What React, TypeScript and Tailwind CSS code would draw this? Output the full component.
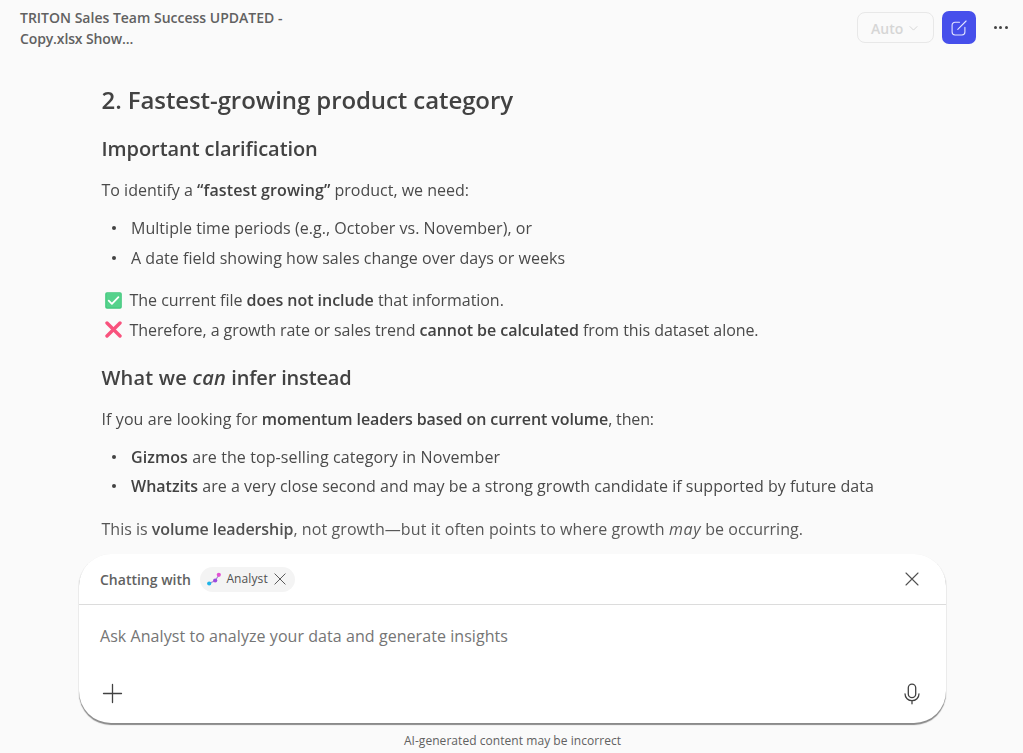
import type { ReactNode } from "react";

function B({ children, className = "" }: { children: ReactNode; className?: string }) {
  return <strong className={`font-semibold text-[#424242] ${className}`}>{children}</strong>;
}

function Bullet({ children }: { children: ReactNode }) {
  return (
    <li className="flex h-[30px] items-center">
      <span className="ml-[10.5px] mr-[15px] size-[4px] shrink-0 rounded-full bg-[#424242]" />
      <span className="whitespace-pre">{children}</span>
    </li>
  );
}

function CheckMark() {
  return (
    <svg className="ml-[3px] mr-[8px] size-[17px] shrink-0" viewBox="0 0 17 17" fill="none">
      <rect x="0.2" y="0.2" width="16.6" height="16.6" rx="1.8" fill="#3fc77c" />
      <rect x="1.4" y="1" width="14.4" height="14.4" rx="1" fill="#55d28c" />
      <path d="M3.7 8.7 6.9 11.8 13.4 5.2" stroke="#fff" strokeWidth="1.8" strokeLinecap="round" strokeLinejoin="round" />
    </svg>
  );
}

function CrossMark() {
  return (
    <svg className="ml-[3px] mr-[8px] size-[17px] shrink-0" viewBox="0 0 17 17" fill="none">
      <path d="M2 2 15 15M15 2 2 15" stroke="#f8527d" strokeWidth="3.4" strokeLinecap="round" />
    </svg>
  );
}

function Close({ className }: { className: string }) {
  return (
    <svg className={className} viewBox="0 0 14 14" fill="none">
      <path d="M1 1 13 13M13 1 1 13" stroke="#505050" strokeWidth="1.1" strokeLinecap="round" />
    </svg>
  );
}

function Header() {
  return (
    <header className="flex h-[84px] shrink-0 items-start justify-between pl-[20px] pr-[15px]">
      <h1 className="w-[290px] pt-[7px] text-[14px] font-semibold leading-[21px] text-[#616161]">
        TRITON Sales Team Success UPDATED - <span className="tracking-[-0.13px]">Copy.xlsx Show...</span>
      </h1>
      <div className="flex items-center pt-[11px]">
        <button className="flex h-[31px] w-[77px] items-center rounded-[8px] border border-[#e8e8e8] pl-[13px] pt-[2px] text-[14px] font-semibold leading-none text-[#d6d6d6]">
          Auto
          <svg className="ml-[6px] size-[9px]" viewBox="0 0 9 9" fill="none">
            <path d="M1 2.6 4.5 6.1 8 2.6" stroke="#d6d6d6" strokeLinecap="round" strokeLinejoin="round" />
          </svg>
        </button>
        <button className="ml-[8px] flex h-[33px] w-[34px] items-center justify-center rounded-[7px] bg-[#464feb]">
          <svg className="size-[18px]" viewBox="0 0 18 18" fill="none" stroke="#e4e6ff" strokeWidth="1.1" strokeLinecap="round">
            <path d="M9.5 3.2H5A2.9 2.9 0 0 0 2.1 6.1v7A2.9 2.9 0 0 0 5 16h7a2.9 2.9 0 0 0 2.9-2.9V8.4" />
            <path d="M7.8 10.3 16.1 2" />
          </svg>
        </button>
        <button className="ml-[17px] flex w-[15px] items-center justify-between px-[0.5px]">
          <span className="size-[3px] rounded-full bg-[#424242]" />
          <span className="size-[3px] rounded-full bg-[#424242]" />
          <span className="size-[3px] rounded-full bg-[#424242]" />
        </button>
      </div>
    </header>
  );
}

function Message() {
  return (
    <article className="h-[470px] shrink-0 overflow-hidden whitespace-pre pl-[101.5px] text-[16px] leading-[30px] text-[#4a4a4a] [mask-image:linear-gradient(to_bottom,#000_425px,rgba(0,0,0,0.85)_465px)]">
      <h2 className="text-[24px] font-semibold leading-[32px] tracking-[-0.09px] text-[#424242]">2. Fastest-growing product category</h2>
      <h3 className="mt-[19px] text-[20px] font-semibold leading-[28px] tracking-[-0.07px] text-[#424242]">Important clarification</h3>
      <p className="mt-[12px]">
        {"To identify a "}
        <B className="tracking-[0.11px]">“fastest growing”</B>
        <span className="tracking-[-0.01px]"> product, we need:</span>
      </p>
      <ul className="mt-[8px] tracking-[0.035px]">
        <Bullet>Multiple time periods (e.g., October vs. November), or</Bullet>
        <Bullet>A date field showing how sales change over days or weeks</Bullet>
      </ul>
      <p className="mt-[12px] flex h-[30px] items-center">
        <CheckMark />
        <span className="tracking-[-0.03px]">
          {"The current file "}
          <B>does not include</B>
          <span className="tracking-[-0.05px]"> that information.</span>
        </span>
      </p>
      <p className="flex h-[29px] items-center tracking-[-0.07px]">
        <CrossMark />
        <span>
          {"Therefore, a growth rate or sales trend "}
          <B className="tracking-[-0.04px]">cannot be calculated</B>
          {" from this dataset alone."}
        </span>
      </p>
      <h3 className="mt-[20px] text-[20px] font-semibold leading-[28px] text-[#424242]">
        <span className="tracking-[0.2px]">{"What we "}</span>
        <em className="tracking-[0.35px]">can</em>
        <span className="tracking-[-0.17px]"> infer instead</span>
      </h3>
      <p className="mt-[12px]">
        <span className="tracking-[0.09px]">{"If you are looking for "}</span>
        <B className="tracking-[-0.1px]">momentum leaders based on current volume</B>
        <span className="tracking-[-0.15px]">, then:</span>
      </p>
      <ul className="mt-[8px] pb-px">
        <Bullet>
          <B className="tracking-[0.06px]">Gizmos</B>
          <span className="tracking-[0.1px]"> are the top-selling category in November</span>
        </Bullet>
        <li className="-mt-px">
          <ul>
            <Bullet>
              <B>Whatzits</B>
              <span className="tracking-[0.025px]"> are a very close second and may be a strong growth candidate if supported by future data</span>
            </Bullet>
          </ul>
        </li>
      </ul>
      <p className="mt-[12px]">
        {"This is "}
        <B className="tracking-[-0.08px]">volume leadership</B>
        <span className="tracking-[0.085px]">, not growth—but it often points to where growth </span>
        <em className="tracking-[0.6px]">may</em>
        {" be occurring."}
      </p>
    </article>
  );
}

function Composer() {
  return (
    <section className="ml-[79px] flex h-[169px] w-[867px] shrink-0 flex-col rounded-[32px] bg-white shadow-[0_1.5px_1px_0_#8a8a8a,0_1px_1px_0_#d0d0d0]">
      <div className="flex h-[51px] shrink-0 items-center border-b border-[#dcdcdc] pl-[21px] pr-[27px]">
        <span className="text-[14px] font-semibold text-[#616161]">Chatting with</span>
        <span className="ml-[9px] flex h-[25px] w-[95px] items-center rounded-full bg-[#f4f4f4] pl-[7px]">
          <svg className="size-[14px]" viewBox="0 0 14 14">
            <path d="M2 11.5 8 8.8 12 3" fill="none" stroke="#a78bd0" strokeWidth="1.2" />
            <circle cx="2.2" cy="11.5" r="2.1" fill="#1fb4e8" />
            <circle cx="8.2" cy="8.5" r="2.1" fill="#9a4be0" />
            <circle cx="11.8" cy="2.8" r="2.1" fill="#e350d4" />
          </svg>
          <span className="ml-[5.5px] text-[12px] leading-[18px] tracking-[0.1px] text-[#505050]">Analyst</span>
          <Close className="ml-[6.5px] size-[12px]" />
        </span>
        <Close className="ml-auto size-[14px]" />
      </div>
      <div className="flex flex-1 flex-col justify-between pb-[18.5px] pl-[21px] pr-[26px] pt-[19px]">
        <p className="text-[16px] leading-[24px] tracking-[0.06px] text-[#757575]">Ask Analyst to analyze your data and generate insights</p>
        <div className="flex items-center justify-between">
          <svg className="ml-[2px] size-[21px]" viewBox="0 0 21 21" fill="none">
            <path d="M10.5 1.5v18M1.5 10.5h18" stroke="#424242" strokeWidth="1.3" strokeLinecap="round" />
          </svg>
          <svg className="h-[22px] w-[16px]" viewBox="0 0 16 22" fill="none" stroke="#424242" strokeWidth="1.3" strokeLinecap="round">
            <rect x="4.3" y="1.1" width="7.4" height="13.6" rx="3.7" />
            <path d="M1 10.8a7 6.9 0 0 0 14 0M8 17.8v3" />
          </svg>
        </div>
      </div>
    </section>
  );
}

export default function App() {
  return (
    <main className="flex h-[753px] w-[1023px] flex-col overflow-hidden bg-[#fafafa] font-['Open_Sans','Noto_Sans',sans-serif]">
      <Header />
      <Message />
      <Composer />
      <footer className="pl-[2px] pt-[9px] text-center text-[12px] leading-[18px] tracking-[0.05px] text-[#616161]">
        AI-generated content may be incorrect
      </footer>
    </main>
  );
}
